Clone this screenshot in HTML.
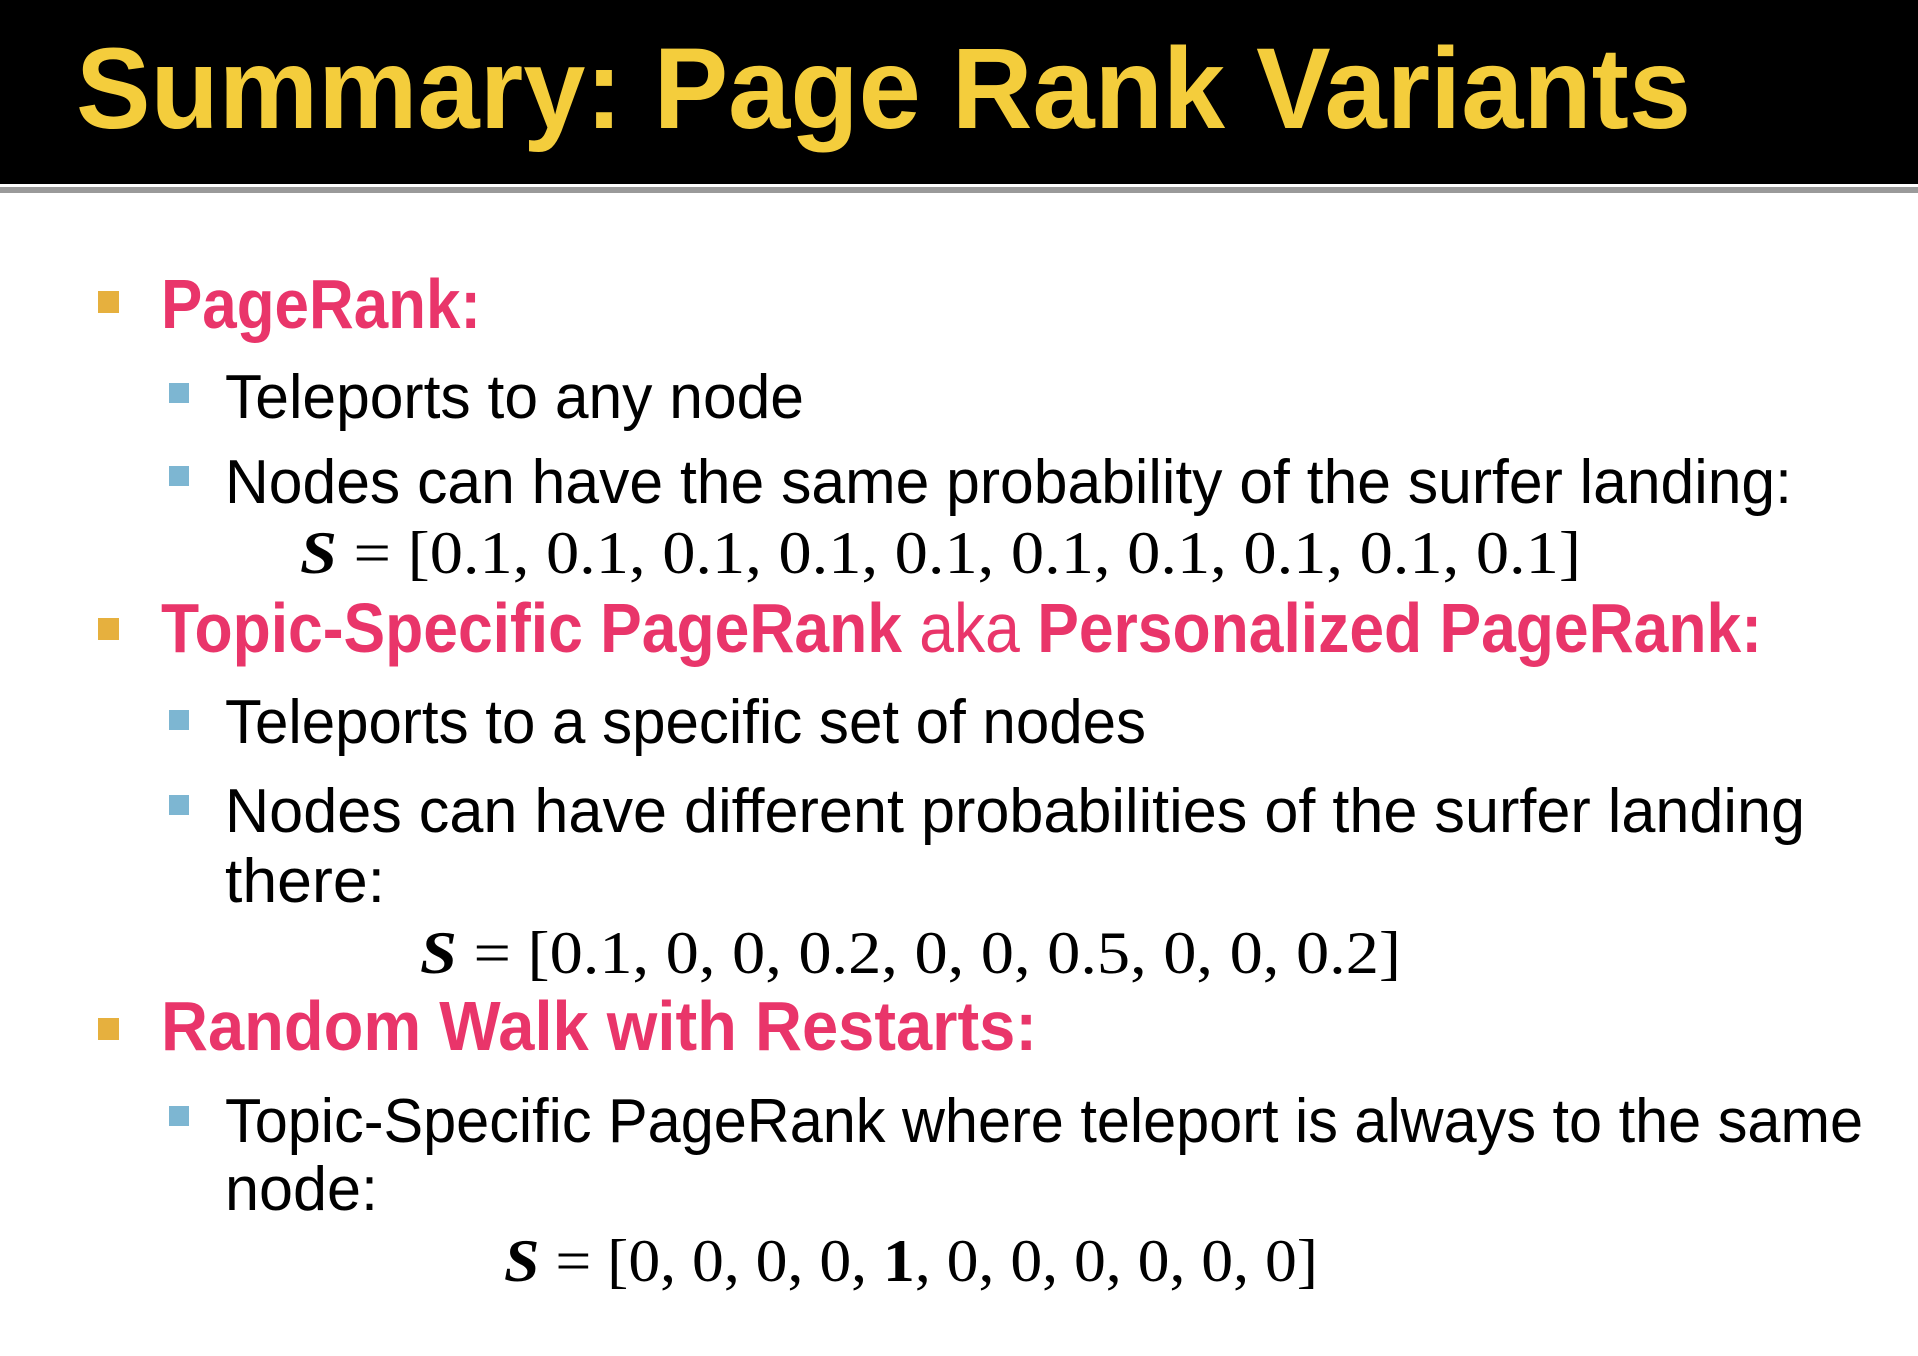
<!DOCTYPE html>
<html><head><meta charset="utf-8"><style>
html,body{margin:0;padding:0;background:#fff;}
svg{display:block}
.t{font-family:"Liberation Sans",sans-serif;}
.m{font-family:"Liberation Serif",serif;}
</style></head><body>
<svg width="1918" height="1356" viewBox="0 0 1918 1356" xmlns="http://www.w3.org/2000/svg">
<rect x="0" y="0" width="1918" height="184" fill="#000"/>
<rect x="0" y="184" width="1918" height="3" fill="#fff"/>
<rect x="0" y="187" width="1918" height="6" fill="#9a9a9a"/>
<text class="t" x="76" y="128" font-size="115" font-weight="bold" fill="#f4cd3c" textLength="1615" lengthAdjust="spacingAndGlyphs">Summary: Page Rank Variants</text>

<g fill="#e6b03e">
<rect x="98" y="291" width="21" height="22"/>
<rect x="98" y="618" width="21" height="22"/>
<rect x="98" y="1018" width="21" height="22"/>
</g>
<g fill="#7db6d2">
<rect x="169" y="383" width="20" height="20"/>
<rect x="169" y="466" width="20" height="20"/>
<rect x="169" y="710" width="20" height="20"/>
<rect x="169" y="795" width="20" height="20"/>
<rect x="169" y="1106" width="20" height="20"/>
</g>

<g fill="#e9356a" font-weight="bold">
<text class="t" x="161" y="328" font-size="70" textLength="320" lengthAdjust="spacingAndGlyphs">PageRank:</text>
<text class="t" x="161" y="652" font-size="70" textLength="1601" lengthAdjust="spacingAndGlyphs">Topic-Specific PageRank <tspan font-weight="normal">aka</tspan> Personalized PageRank:</text>
<text class="t" x="161" y="1050" font-size="70" textLength="876" lengthAdjust="spacingAndGlyphs">Random Walk with Restarts:</text>
</g>

<g fill="#000" class="t" font-size="62">
<text x="225" y="418" textLength="579" lengthAdjust="spacingAndGlyphs">Teleports to any node</text>
<text x="225" y="503" textLength="1567" lengthAdjust="spacingAndGlyphs">Nodes can have the same probability of the surfer landing:</text>
<text x="225" y="743" textLength="921" lengthAdjust="spacingAndGlyphs">Teleports to a specific set of nodes</text>
<text x="225" y="832" textLength="1580" lengthAdjust="spacingAndGlyphs">Nodes can have different probabilities of the surfer landing</text>
<text x="225" y="902" textLength="160" lengthAdjust="spacingAndGlyphs">there:</text>
<text x="225" y="1142" textLength="1638" lengthAdjust="spacingAndGlyphs">Topic-Specific PageRank where teleport is always to the same</text>
<text x="225" y="1210" textLength="153" lengthAdjust="spacingAndGlyphs">node:</text>
</g>

<g fill="#000" class="m" font-size="60">
<text x="300" y="573" textLength="1281" lengthAdjust="spacingAndGlyphs"><tspan font-weight="bold" font-style="italic">S</tspan>  =  [0.1, 0.1, 0.1, 0.1, 0.1, 0.1, 0.1, 0.1, 0.1, 0.1]</text>
<text x="420" y="973" textLength="981" lengthAdjust="spacingAndGlyphs"><tspan font-weight="bold" font-style="italic">S</tspan>  =  [0.1, 0, 0, 0.2, 0, 0, 0.5, 0, 0, 0.2]</text>
<text x="504" y="1281" textLength="814" lengthAdjust="spacingAndGlyphs"><tspan font-weight="bold" font-style="italic">S</tspan> = [0, 0, 0, 0, <tspan font-weight="bold">1</tspan>, 0, 0, 0, 0, 0, 0]</text>
</g>
</svg>
</body></html>
